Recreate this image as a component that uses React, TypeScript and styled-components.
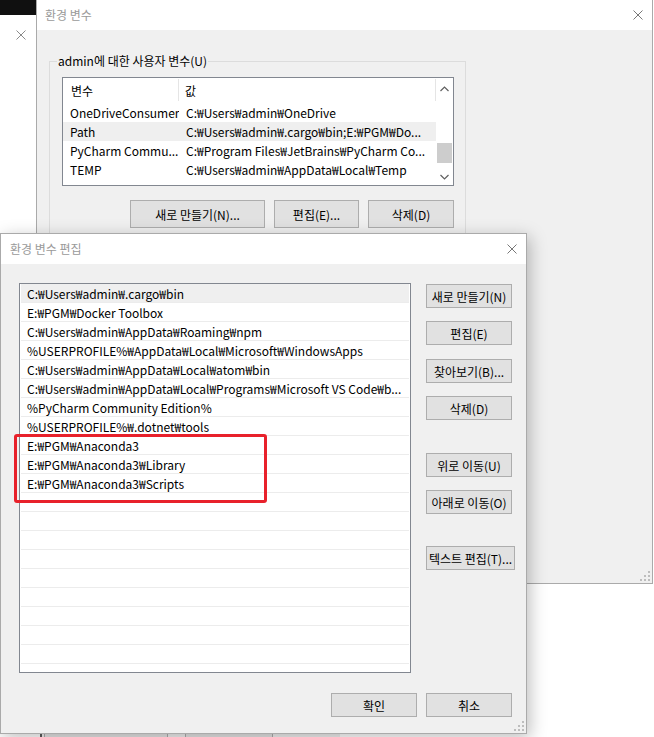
import React from "react";
import styled, { createGlobalStyle } from "styled-components";

const GlobalStyle = createGlobalStyle`
  html, body { margin: 0; padding: 0; background: #fff; }
  body {
    font-family: "Noto Sans CJK KR", "Noto Sans", sans-serif;
    font-size: 12px;
    color: #000;
  }
  * { box-sizing: border-box; }
`;

const Desktop = styled.div`
  position: relative;
  width: 654px;
  height: 737px;
  overflow: hidden;
  background: #fff;
`;

const Window = styled.div<{ $x: number; $y: number; $w: number; $h: number; $shadow?: boolean }>`
  position: absolute;
  left: ${(p) => p.$x}px;
  top: ${(p) => p.$y}px;
  width: ${(p) => p.$w}px;
  height: ${(p) => p.$h}px;
  border: 1px solid #aaaaaa;
  background: #f0f0f0;
  display: flex;
  flex-direction: column;
  ${(p) => (p.$shadow ? "box-shadow: 3px 4px 16px rgba(0,0,0,0.26);" : "")}
`;

const BackWindow = styled.div`
  position: absolute;
  left: 0;
  top: 0;
  width: 37px;
  height: 737px;
  background: #fff;
  display: flex;
  flex-direction: column;
  align-items: flex-end;
`;

const BlackBar = styled.div`
  align-self: stretch;
  height: 15px;
  background: #101010;
`;

const BackClose = styled.div`
  margin: 15px 11px 0 0;
  display: flex;
`;

const SysWindow = styled.div`
  position: absolute;
  left: 40px;
  top: 600px;
  width: 300px;
  height: 200px;
  border-left: 2px solid #5c5c5c;
  background: #f0f0f0;
  display: flex;
  align-items: flex-start;
  padding: 120px 0 0 2px;
  gap: 17px;
`;

const SysButton = styled.div<{ $w: number }>`
  width: ${(p) => p.$w}px;
  height: 30px;
  background: #e5e5e5;
  border: 1px solid #adadad;
`;

const TitleBar = styled.div<{ $pl: number; $pr: number }>`
  height: 30px;
  flex: none;
  background: #fff;
  display: flex;
  align-items: center;
  justify-content: space-between;
  padding: 0 ${(p) => p.$pr}px 0 ${(p) => p.$pl}px;
`;

const TitleText = styled.span`
  color: #9a9a9a;
  font-size: 12px;
  line-height: 16px;
`;

const CloseIcon = ({ color = "#777" }: { color?: string }) => (
  <svg width="10" height="10" viewBox="0 0 10 10">
    <path d="M0.5 0.5 L9.5 9.5 M9.5 0.5 L0.5 9.5" stroke={color} strokeWidth="1" fill="none" />
  </svg>
);

const Grip = styled.div`
  position: absolute;
  right: 2px;
  bottom: 2px;
  width: 10px;
  height: 10px;
  display: flex;
`;

const GripIcon = () => (
  <svg width="10" height="10" viewBox="0 0 10 10">
    <g fill="#bdbdbd">
      <rect x="8" y="0" width="2" height="2" />
      <rect x="4" y="4" width="2" height="2" />
      <rect x="8" y="4" width="2" height="2" />
      <rect x="0" y="8" width="2" height="2" />
      <rect x="4" y="8" width="2" height="2" />
      <rect x="8" y="8" width="2" height="2" />
    </g>
  </svg>
);

/* ---------- env window ---------- */
const EnvBody = styled.div`
  flex: 1;
  padding: 23px 0 0 12px;
`;

const Group = styled.fieldset`
  width: 417px;
  margin: 0;
  border: 1px solid #dcdcdc;
  padding: 0 11px 40px 12px;
`;

const Legend = styled.legend`
  margin-left: -5px;
  padding: 0 1px;
  line-height: 16px;
  font-size: 12px;
`;

const ListView = styled.div`
  margin-top: 8px;
  width: 392px;
  height: 109px;
  border: 1px solid #828790;
  background: #fff;
  display: flex;
  overflow: hidden;
`;

const Table = styled.div`
  flex: 1;
  display: flex;
  flex-direction: column;
`;

const HeaderRow = styled.div`
  height: 25px;
  flex: none;
  display: flex;
  align-items: stretch;
`;

const HeaderCell = styled.div<{ $w?: number }>`
  ${(p) => (p.$w ? `width: ${p.$w}px; flex: none;` : "flex: 1;")}
  padding-left: ${(p) => (p.$w ? 8 : 6)}px;
  display: flex;
  align-items: center;
  border-right: 1px solid #e5e5e5;
  margin: 1px 0 2px;
`;

const DataRow = styled.div<{ $sel?: boolean }>`
  height: 19px;
  flex: none;
  display: flex;
  align-items: center;
  background: ${(p) => (p.$sel ? "#efefef" : "transparent")};
  white-space: nowrap;
`;

const DataCell = styled.div<{ $w?: number }>`
  ${(p) => (p.$w ? `width: ${p.$w}px; flex: none;` : "flex: 1;")}
  padding-left: 7px;
  overflow: hidden;
`;

const ScrollBar = styled.div`
  width: 17px;
  flex: none;
  display: flex;
  flex-direction: column;
  align-items: center;
  background: #fff;
`;

const ScrollArrow = styled.div<{ $down?: boolean }>`
  height: 17px;
  width: 17px;
  display: flex;
  align-items: center;
  justify-content: center;
  margin-top: ${(p) => (p.$down ? "auto" : "2px")};
`;

const Thumb = styled.div`
  width: 15px;
  height: 20px;
  margin-top: 46px;
  background: #cdcdcd;
`;

const Chevron = ({ down }: { down?: boolean }) => (
  <svg width="9" height="6" viewBox="0 0 9 6">
    <path
      d={down ? "M0.5 1 L4.5 5 L8.5 1" : "M0.5 5 L4.5 1 L8.5 5"}
      stroke="#606060"
      strokeWidth="1.2"
      fill="none"
    />
  </svg>
);

const ButtonRow = styled.div<{ $mt: number; $gap: number; $pr?: number }>`
  margin-top: ${(p) => p.$mt}px;
  padding-right: ${(p) => p.$pr ?? 0}px;
  display: flex;
  justify-content: flex-end;
  gap: ${(p) => p.$gap}px;
`;

const Button = styled.div<{ $w: number; $h: number; $mt?: number }>`
  width: ${(p) => p.$w}px;
  height: ${(p) => p.$h}px;
  margin-top: ${(p) => p.$mt ?? 0}px;
  flex: none;
  background: #e1e1e1;
  border: 1px solid #adadad;
  display: flex;
  align-items: center;
  justify-content: center;
  font-size: 12px;
  white-space: nowrap;
`;

/* ---------- edit window ---------- */
const EditBody = styled.div`
  flex: 1;
  display: flex;
  flex-direction: column;
  padding: 19px 11px 16px 18px;
`;

const MainRow = styled.div`
  display: flex;
  gap: 15px;
`;

const PathList = styled.div`
  width: 392px;
  height: 390px;
  flex: none;
  border: 1px solid #828790;
  background: #fff;
  overflow: hidden;
  display: flex;
  flex-direction: column;
`;

const PathRow = styled.div<{ $sel?: boolean }>`
  height: 19px;
  flex: none;
  margin: 0 1px 0 1px;
  padding-left: 6px;
  border-bottom: 1px solid #ececec;
  display: flex;
  align-items: center;
  white-space: nowrap;
  background: ${(p) => (p.$sel ? "#efefef" : "transparent")};
`;

const SideButtons = styled.div`
  width: 89px;
  flex: none;
  display: flex;
  flex-direction: column;
  align-items: flex-start;
`;

const Highlight = styled.div`
  position: absolute;
  left: 13px;
  top: 200px;
  width: 253px;
  height: 69px;
  border: 3px solid #e8212b;
  border-radius: 3px;
`;

const envRows = [
  ["OneDriveConsumer", "C:₩Users₩admin₩OneDrive", false],
  ["Path", "C:₩Users₩admin₩.cargo₩bin;E:₩PGM₩Do...", true],
  ["PyCharm Commu...", "C:₩Program Files₩JetBrains₩PyCharm Co...", false],
  ["TEMP", "C:₩Users₩admin₩AppData₩Local₩Temp", false],
] as const;

const paths = [
  "C:₩Users₩admin₩.cargo₩bin",
  "E:₩PGM₩Docker Toolbox",
  "C:₩Users₩admin₩AppData₩Roaming₩npm",
  "%USERPROFILE%₩AppData₩Local₩Microsoft₩WindowsApps",
  "C:₩Users₩admin₩AppData₩Local₩atom₩bin",
  "C:₩Users₩admin₩AppData₩Local₩Programs₩Microsoft VS Code₩b...",
  "%PyCharm Community Edition%",
  "%USERPROFILE%₩.dotnet₩tools",
  "E:₩PGM₩Anaconda3",
  "E:₩PGM₩Anaconda3₩Library",
  "E:₩PGM₩Anaconda3₩Scripts",
];

const sideButtons: [string, number, number][] = [
  ["새로 만들기(N)", 86, 1],
  ["편집(E)", 86, 13],
  ["찾아보기(B)...", 86, 14],
  ["삭제(D)", 86, 13],
  ["위로 이동(U)", 86, 33],
  ["아래로 이동(O)", 86, 13],
  ["텍스트 편집(T)...", 89, 32],
];

export default function App() {
  const rows = [...paths, ...Array(12).fill("")];
  return (
    <>
      <GlobalStyle />
      <Desktop>
        <BackWindow>
          <BlackBar />
          <BackClose>
            <CloseIcon color="#8a8a8a" />
          </BackClose>
        </BackWindow>

        <SysWindow>
          <SysButton $w={124} />
          <SysButton $w={88} />
        </SysWindow>

        <Window $x={36} $y={-1} $w={617} $h={585}>
          <TitleBar $pl={8} $pr={9}>
            <TitleText>환경 변수</TitleText>
            <CloseIcon />
          </TitleBar>
          <EnvBody>
            <Group>
              <Legend>admin에 대한 사용자 변수(U)</Legend>
              <ListView>
                <Table>
                  <HeaderRow>
                    <HeaderCell $w={116}>변수</HeaderCell>
                    <HeaderCell>값</HeaderCell>
                  </HeaderRow>
                  {envRows.map(([n, v, s]) => (
                    <DataRow key={n} $sel={s}>
                      <DataCell $w={116}>{n}</DataCell>
                      <DataCell>{v}</DataCell>
                    </DataRow>
                  ))}
                </Table>
                <ScrollBar>
                  <ScrollArrow>
                    <Chevron />
                  </ScrollArrow>
                  <Thumb />
                  <ScrollArrow $down>
                    <Chevron down />
                  </ScrollArrow>
                </ScrollBar>
              </ListView>
              <ButtonRow $mt={14} $gap={9}>
                <Button $w={135} $h={28}>새로 만들기(N)...</Button>
                <Button $w={85} $h={28}>편집(E)...</Button>
                <Button $w={86} $h={28}>삭제(D)</Button>
              </ButtonRow>
            </Group>
          </EnvBody>
          <Grip>
            <GripIcon />
          </Grip>
        </Window>

        <Window $x={0} $y={233} $w={527} $h={501} $shadow>
          <TitleBar $pl={9} $pr={9}>
            <TitleText>환경 변수 편집</TitleText>
            <CloseIcon />
          </TitleBar>
          <EditBody>
            <MainRow>
              <PathList>
                {rows.map((p, i) => (
                  <PathRow key={i} $sel={i === 0}>
                    {p}
                  </PathRow>
                ))}
              </PathList>
              <SideButtons>
                {sideButtons.map(([t, w, mt]) => (
                  <Button key={t} $w={w} $h={24} $mt={mt}>
                    {t}
                  </Button>
                ))}
              </SideButtons>
            </MainRow>
            <ButtonRow $mt={20} $gap={9} $pr={3}>
              <Button $w={86} $h={24}>확인</Button>
              <Button $w={86} $h={24}>취소</Button>
            </ButtonRow>
          </EditBody>
          <Highlight />
          <Grip>
            <GripIcon />
          </Grip>
        </Window>
      </Desktop>
    </>
  );
}
